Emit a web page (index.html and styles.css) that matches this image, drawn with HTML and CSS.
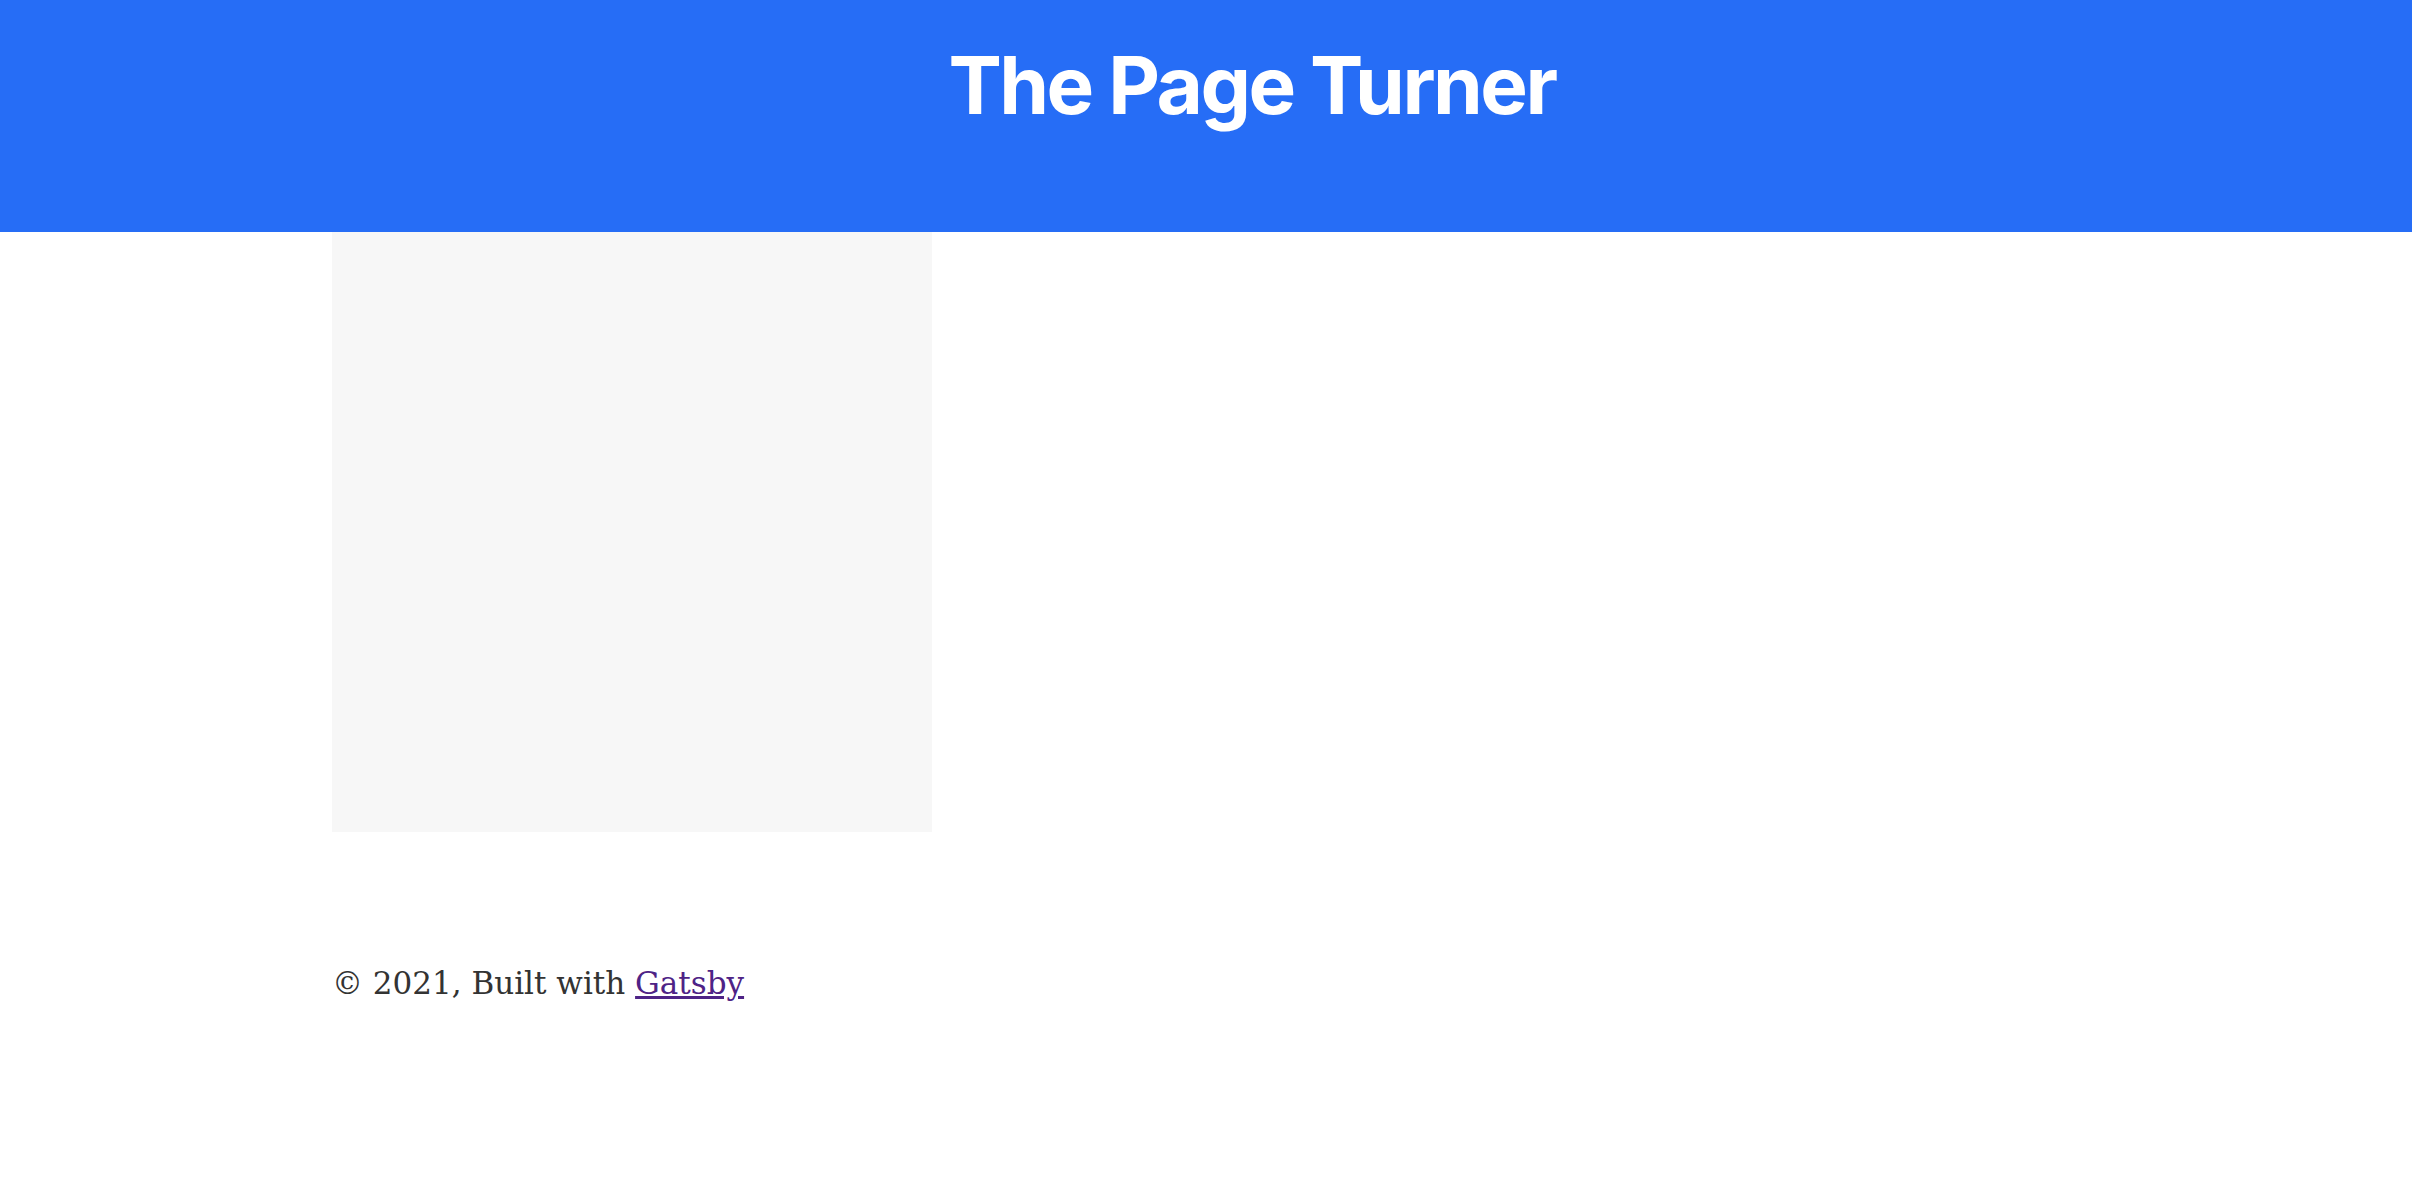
FILE: index.html
```html
<!DOCTYPE html>
<html lang="en">
<head>
<meta charset="utf-8">
<title>The Page Turner</title>
<link rel="stylesheet" href="styles.css">
</head>
<body>
<header class="site-header">
  <h1 class="site-title">The Page Turner</h1>
</header>
<div class="container">
  <main class="main">
    <div class="placeholder"></div>
  </main>
  <footer class="site-footer">
    © 2021, Built with <a class="footer-link" href="#">Gatsby</a>
  </footer>
</div>
</body>
</html>
```

FILE: styles.css
```css
html, body {
  margin: 0;
  padding: 0;
  background: #ffffff;
}

.site-header {
  background: #266df6;
  height: 232px;
  box-sizing: border-box;
  padding-top: 37px;
}

.site-title {
  margin: 0;
  padding-left: 92px;
  text-align: center;
  font-family: Inter, "Noto Sans", sans-serif;
  font-weight: 700;
  font-size: 80px;
  line-height: 96px;
  color: #ffffff;
  letter-spacing: -2.5px;
}

.container {
  max-width: 1748px;
  margin: 0 auto;
}

.main {
  display: flex;
}

.placeholder {
  width: 600px;
  height: 600px;
  background: #f7f7f7;
}

.site-footer {
  margin-top: 133px;
  font-family: "DejaVu Serif", Georgia, serif;
  font-size: 31px;
  line-height: normal;
  color: #333333;
}

.footer-link {
  color: #4e2386;
  text-decoration: underline;
}
```
